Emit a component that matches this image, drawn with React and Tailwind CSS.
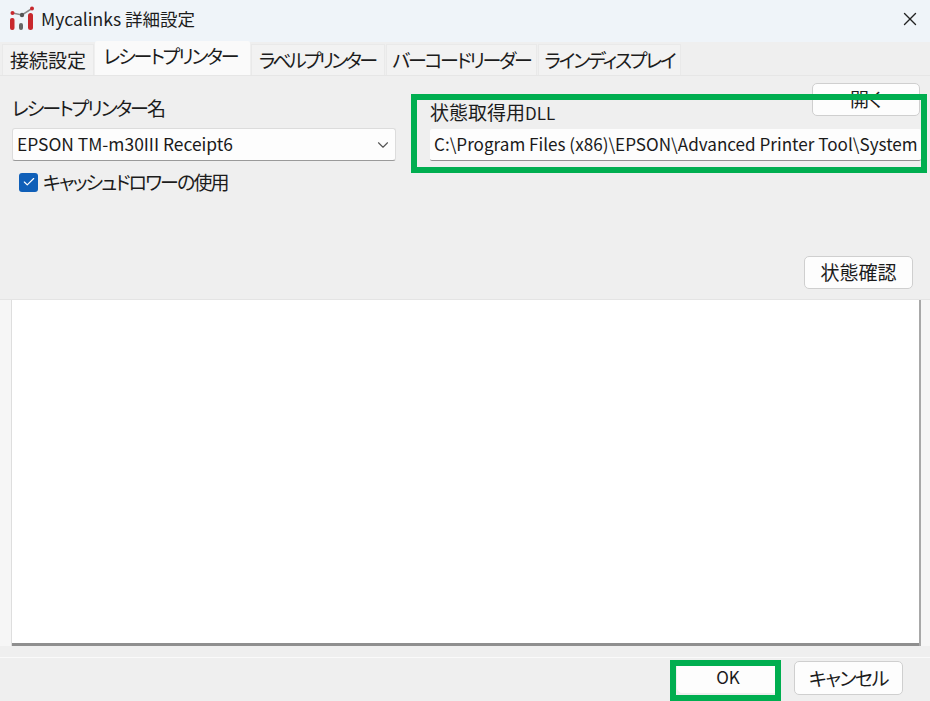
import React from 'react';
import { X, ChevronDown, Check } from 'lucide-react';

const font = "font-['Noto_Sans_CJK_JP','Noto_Sans',sans-serif] [font-feature-settings:'palt']";

function Logo() {
  return (
    <svg width="26" height="26" viewBox="0 0 26 26" className="shrink-0">
      <path d="M4.5 7 L14 9 L24 2.5" stroke="#8a8a8a" strokeWidth="1.5" fill="none" />
      <circle cx="4.5" cy="7" r="2" fill="#c8282d" />
      <circle cx="24" cy="2.5" r="2" fill="#c8282d" />
      <circle cx="14" cy="9" r="2.2" fill="#555" />
      <rect x="2" y="12" width="4.5" height="12" rx="2" fill="#c8282d" />
      <rect x="11" y="17" width="4" height="7" rx="2" fill="#666" />
      <rect x="20" y="7" width="5" height="17" rx="2.5" fill="#c8282d" />
    </svg>
  );
}

function Tab({ children, active, w }) {
  return (
    <div className={`${w} flex items-center justify-center text-[19px] text-[#1c1c1c] whitespace-nowrap ${active ? 'bg-[#fafafa] h-[34px] rounded-t-[2px] pb-[3px]' : 'bg-[#f2f2f2] h-[31px] border border-[#e9e9e9] border-b-0'}`}>
      {children}
    </div>
  );
}

function Button({ children, className }) {
  return (
    <div className={`flex items-center justify-center bg-[#fdfdfd] border border-[#cfcfcf] rounded-[5px] text-[19px] text-[#1b1b1b] ${className}`}>
      {children}
    </div>
  );
}

export default function App() {
  return (
    <div className={`${font} relative w-[930px] h-[701px] overflow-hidden bg-[#efefef] flex flex-col`}>
      {/* Title bar */}
      <div className="h-[42px] bg-[#eff4f9] flex items-center pl-[8px] pr-[9px] pb-[4px] shrink-0">
        <Logo />
        <span className="ml-[7px] text-[17.5px] text-[#1c1c1c]">Mycalinks 詳細設定</span>
        <X className="ml-auto text-[#222]" size={22} strokeWidth={1.5} />
      </div>

      {/* Tabs */}
      <div className="h-[34px] shrink-0 flex items-end pl-[2px] border-b border-[#e6e6e6]">
        <Tab w="w-[92px] mr-[1px]">接続設定</Tab>
        <Tab w="w-[155px] mr-[1px] pr-[4px] tracking-[-2.1px]" active>レシートプリンター</Tab>
        <Tab w="w-[134px] mr-[1px] pr-[2px] tracking-[-2.8px]">ラベルプリンター</Tab>
        <Tab w="w-[151px] mr-[1px] tracking-[-2.3px]">バーコードリーダー</Tab>
        <Tab w="w-[143px] tracking-[-2.1px]">ラインディスプレイ</Tab>
      </div>

      {/* Printer settings */}
      <div className="h-[223px] shrink-0 flex flex-col">
        <div className="flex flex-1">
          <div className="w-[430px] shrink-0 pl-[12px] pt-[20px]">
            <div className="text-[19px] leading-[24px] tracking-[-2px] text-[#1c1c1c]">レシートプリンター名</div>
            <div className="mt-[8px] w-[384px] h-[33px] bg-[#fdfdfd] border border-[#dcdcdc] border-b-[#9a9a9a] rounded-[3px] flex items-center pl-[4px] pr-[3px]">
              <span className="text-[17.4px] text-[#1a1a1a]">EPSON TM-m30III Receipt6</span>
              <ChevronDown className="ml-auto text-[#555]" size={18} strokeWidth={1.5} />
            </div>
            <div className="mt-[9px] ml-[7px] flex items-center gap-[5px]">
              <div className="w-[19px] h-[19px] bg-[#0f5fb8] rounded-[3px] flex items-center justify-center">
                <Check className="text-white" size={14} strokeWidth={2} />
              </div>
              <span className="text-[19px] leading-[24px] tracking-[-1.9px] text-[#1c1c1c]">キャッシュドロワーの使用</span>
            </div>
          </div>
          <div className="w-[491px] pt-[7px]">
            <Button className="ml-[382px] w-[108px] h-[33px]">開く</Button>
            <div className="mt-[-16px] text-[19px] leading-[24px] text-[#1c1c1c]">状態取得用<span className="text-[17px]">DLL</span></div>
            <div className="mt-[4px] h-[32px] bg-[#fdfdfd] border-b border-[#8f8f8f] rounded-[2px] flex items-center pl-[4px] pb-[2px] overflow-hidden">
              <span className="text-[17.1px] text-[#1a1a1a] whitespace-nowrap">C:\Program Files (x86)\EPSON\Advanced Printer Tool\System</span>
            </div>
          </div>
        </div>
        <div className="flex justify-end pr-[17px] pb-[10px]">
          <Button className="w-[109px] h-[33px]">状態確認</Button>
        </div>
      </div>

      {/* Status output */}
      <div className="h-[347px] shrink-0 flex bg-[#f6f6f6] border-t border-[#e4e4e4]">
        <div className="w-[12px] border-r border-[#dedede]" />
        <div className="w-[907px] bg-white border-b-[3px] border-[#8f8f8f]" />
        <div className="w-[11px] border-l-2 border-[#a8a8a8]" />
      </div>

      {/* Footer */}
      <div className="mt-[11px] flex-1 border-t border-[#fafafa] flex justify-end items-start pr-[27px] pt-[3px]">
        <Button className="w-[102px] h-[32px] mr-[15px] border-[#fdfdfd] !text-[17px]">OK</Button>
        <Button className="w-[109px] h-[34px] tracking-[-1.4px]">キャンセル</Button>
      </div>

      {/* Annotation boxes */}
      <div className="absolute left-[411px] top-[94px] w-[516px] h-[79px] border-[6px] border-[#00ae50]" />
      <div className="absolute left-[670px] top-[660px] w-[111px] h-[41px] border-[6px] border-[#00ae50]" />
    </div>
  );
}
